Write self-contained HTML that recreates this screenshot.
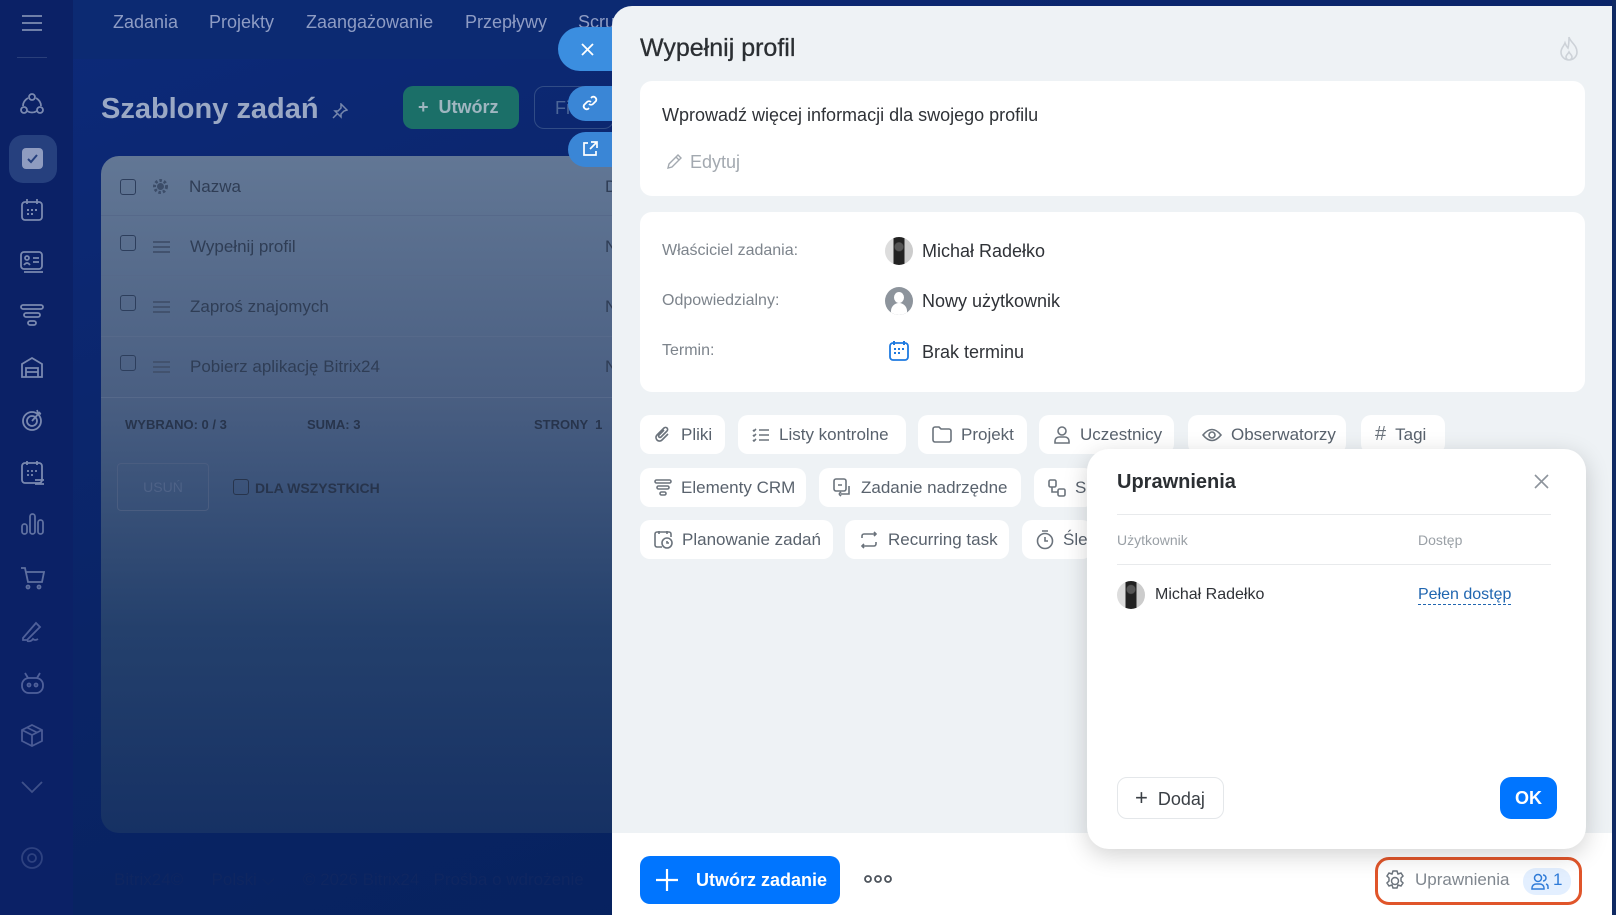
<!DOCTYPE html>
<html><head><meta charset="utf-8"><style>
*{box-sizing:border-box;margin:0;padding:0}
body{width:1616px;height:915px;overflow:hidden;position:relative;font-family:"Liberation Sans",sans-serif;background:#0a2158}
.abs{position:absolute}
.bg{left:0;top:0;width:1616px;height:915px;background:linear-gradient(160deg,#0d2a7a 0%,#0a2466 45%,#04215a 100%)}
.side{left:0;top:0;width:73px;height:915px;background:#0b2166}
.nav{left:73px;top:0;width:560px;height:59px;background:#0c2a72}
.navt{top:12px;font-size:18px;color:#8e9cc4}
.card{left:101px;top:156px;width:530px;height:677px;border-radius:18px;background:linear-gradient(180deg,#627795 0%,#4a5f82 35%,#24406c 70%,#163164 100%)}
.row{left:101px;width:511px;height:1px;background:#56698a}
.cb{width:16px;height:16px;border:1.5px solid #2d3e5c;border-radius:3px}
.rt{font-size:17px;color:#2f3d55}
.panel{left:612px;top:6px;width:1000px;height:909px;background:#eef2f5;border-top-left-radius:20px}
.w{background:#fff;border-radius:12px}
.chip{position:absolute;height:39px;background:#fff;border-radius:10px;font-size:17px;color:#59626d;display:flex;align-items:center;padding-left:14px;gap:9px;white-space:nowrap;overflow:hidden}
.chip svg{flex:none}
.lbl{left:662px;font-size:16px;color:#7d848c}
.val{left:922px;font-size:18px;color:#2f3237}
.sbtn{background:#3b8ee0;border-radius:22px 0 0 22px}
</style></head><body>
<div class="abs bg"></div>
<div class="abs side"></div>
<div class="abs nav"></div>
<svg class="abs" style="left:21px;top:14px" width="22" height="18"><path d="M1 2h20M1 9h20M1 16h20" stroke="#6f7fa8" stroke-width="2"/></svg>
<div class="abs" style="left:17px;top:57px;width:30px;height:1px;background:#2a3f7a"></div>
<svg class="abs" style="left:20px;top:92px" width="24" height="24" fill="none" stroke="#7a89b0" stroke-width="1.8"><circle cx="12" cy="5" r="3"/><circle cx="4" cy="18" r="3"/><circle cx="20" cy="18" r="3"/><path d="M7 19q5 3 10 0M3 14q0-5 5-8M21 14q0-5-5-8"/></svg>
<div class="abs" style="left:9px;top:135px;width:48px;height:48px;border-radius:14px;background:#26407e"></div>
<svg class="abs" style="left:22px;top:148px" width="21" height="21"><rect width="21" height="21" rx="4" fill="#8f9cc0"/><path d="M6 11l3 3 6-7" stroke="#26407e" stroke-width="2" fill="none"/></svg>
<svg class="abs" style="left:20px;top:198px" width="24" height="24" fill="none" stroke="#7a89b0" stroke-width="1.8"><rect x="2" y="4" width="20" height="18" rx="3"/><path d="M7 1v5M17 1v5"/><path d="M7 12h2M11 12h2M15 12h2M7 16h2M11 16h2" stroke-width="2"/></svg>
<svg class="abs" style="left:19px;top:250px" width="26" height="24" fill="none" stroke="#7a89b0" stroke-width="1.8"><rect x="2" y="2" width="21" height="17" rx="3"/><circle cx="8" cy="8" r="2"/><path d="M5 15q3-4 6 0M14 8h6M14 12h6M5 22h19"/></svg>
<svg class="abs" style="left:20px;top:303px" width="24" height="24" fill="none" stroke="#7a89b0" stroke-width="1.8"><rect x="1" y="2" width="22" height="4" rx="2"/><rect x="4" y="10" width="16" height="4" rx="2"/><rect x="8" y="18" width="8" height="4" rx="2"/></svg>
<svg class="abs" style="left:20px;top:355px" width="24" height="24" fill="none" stroke="#7a89b0" stroke-width="1.8"><path d="M2 22V9l10-6 10 6v13zM6 22v-9h12v9M6 17h12"/></svg>
<svg class="abs" style="left:20px;top:408px" width="24" height="24" fill="none" stroke="#7a89b0" stroke-width="1.8"><circle cx="12" cy="13" r="9"/><circle cx="12" cy="13" r="5"/><path d="M12 13l8-9M17 2l1 3 3 1"/></svg>
<svg class="abs" style="left:20px;top:460px" width="26" height="26" fill="none" stroke="#7a89b0" stroke-width="1.8"><rect x="2" y="3" width="20" height="20" rx="3"/><path d="M7 1v4M17 1v4M7 11h2M11 11h2M15 11h2M7 15h2M11 15h2M15 20h9M15 24h9"/></svg>
<svg class="abs" style="left:20px;top:512px" width="24" height="24" fill="none" stroke="#5f70a0" stroke-width="1.8"><rect x="2" y="12" width="5" height="10" rx="2.5"/><rect x="10" y="2" width="5" height="20" rx="2.5"/><rect x="18" y="8" width="5" height="14" rx="2.5"/></svg>
<svg class="abs" style="left:20px;top:566px" width="25" height="24" fill="none" stroke="#5f70a0" stroke-width="1.8"><path d="M1 2h4l3 14h14l2-10H6"/><circle cx="8" cy="21" r="1.5"/><circle cx="19" cy="21" r="1.5"/></svg>
<svg class="abs" style="left:20px;top:619px" width="24" height="24" fill="none" stroke="#4f609a" stroke-width="1.8"><path d="M3 19L16 4l4 4L7 21H3zM7 22q4 1 6-2q2 2 5 0"/></svg>
<svg class="abs" style="left:20px;top:671px" width="25" height="24" fill="none" stroke="#4f609a" stroke-width="1.8"><path d="M5 2l3 5M20 2l-3 5"/><rect x="2" y="7" width="21" height="15" rx="7"/><circle cx="9" cy="14" r="1.5"/><circle cx="16" cy="14" r="1.5"/></svg>
<svg class="abs" style="left:20px;top:723px" width="24" height="25" fill="none" stroke="#4a5b95" stroke-width="1.8"><path d="M12 2l10 5v11l-10 5-10-5V7zM2 7l10 5 10-5M12 12v11M7 4.5l10 5"/></svg>
<svg class="abs" style="left:20px;top:780px" width="24" height="14" fill="none" stroke="#3f518a" stroke-width="1.8"><path d="M2 2l10 10 10-10"/></svg>
<svg class="abs" style="left:20px;top:846px" width="24" height="24" fill="none" stroke="#2e4280" stroke-width="1.8"><circle cx="12" cy="12" r="4"/><circle cx="12" cy="12" r="10"/></svg>
<div class="abs navt" style="left:113px">Zadania</div>
<div class="abs navt" style="left:209px">Projekty</div>
<div class="abs navt" style="left:306px">Zaangażowanie</div>
<div class="abs navt" style="left:465px">Przepływy</div>
<div class="abs navt" style="left:578px">Scru</div>
<div class="abs" style="left:101px;top:93px;font-size:29px;font-weight:bold;color:#9aa8c4">Szablony zadań</div>
<svg class="abs" style="left:332px;top:103px" width="16" height="16" fill="none" stroke="#7687ad" stroke-width="1.5"><path d="M9 1l6 6-3 1-3 3 0 3-6-6 3 0 3-3zM5 11l-4 4"/></svg>
<div class="abs" style="left:403px;top:86px;width:116px;height:43px;border-radius:10px;background:#1b6f68;color:#9fb6c0;font-size:18px;font-weight:bold;line-height:43px;padding-left:15px">+&nbsp; Utwórz</div>
<div class="abs" style="left:534px;top:86px;width:80px;height:43px;border-radius:10px;border:1px solid #314c86;color:#4c6698;font-size:18px;line-height:43px;padding-left:20px">Fi</div>
<div class="abs card"></div>
<div class="abs cb" style="left:120px;top:179px"></div>
<svg class="abs" style="left:152px;top:178px" width="17" height="17"><circle cx="8.5" cy="8.5" r="6" fill="none" stroke="#3c4d69" stroke-width="3" stroke-dasharray="2.5 2"/><circle cx="8.5" cy="8.5" r="3.5" fill="#3c4d69"/></svg>
<div class="abs rt" style="left:189px;top:177px">Nazwa</div>
<div class="abs row" style="top:215px"></div>
<div class="abs row" style="top:275px"></div>
<div class="abs row" style="top:336px"></div>
<div class="abs row" style="top:397px"></div>
<div class="abs cb" style="left:120px;top:235px"></div><div class="abs" style="left:153px;top:241px;width:17px;height:12px;border-top:2px solid #42526e;border-bottom:2px solid #42526e"><div style="margin-top:3px;height:2px;background:#42526e"></div></div>
<div class="abs rt" style="left:190px;top:237px">Wypełnij profil</div>
<div class="abs cb" style="left:120px;top:295px"></div><div class="abs" style="left:153px;top:301px;width:17px;height:12px;border-top:2px solid #42526e;border-bottom:2px solid #42526e"><div style="margin-top:3px;height:2px;background:#42526e"></div></div>
<div class="abs rt" style="left:190px;top:297px">Zaproś znajomych</div>
<div class="abs cb" style="left:120px;top:355px"></div><div class="abs" style="left:153px;top:361px;width:17px;height:12px;border-top:2px solid #42526e;border-bottom:2px solid #42526e"><div style="margin-top:3px;height:2px;background:#42526e"></div></div>
<div class="abs rt" style="left:190px;top:357px">Pobierz aplikację Bitrix24</div>
<div class="abs rt" style="left:605px;top:177px">D</div>
<div class="abs rt" style="left:605px;top:297px">N</div>
<div class="abs rt" style="left:605px;top:357px">N</div>
<div class="abs rt" style="left:605px;top:237px">N</div>
<div class="abs" style="left:125px;top:417px;font-size:13px;color:#27344c;font-weight:bold">WYBRANO: 0 / 3</div>
<div class="abs" style="left:307px;top:417px;font-size:13px;color:#27344c;font-weight:bold">SUMA: 3</div>
<div class="abs" style="left:534px;top:417px;font-size:13px;color:#27344c;font-weight:bold">STRONY &nbsp;1</div>
<div class="abs" style="left:117px;top:463px;width:92px;height:48px;border:1px solid #4a5d80;border-radius:4px;color:#4e6287;font-size:14px;text-align:center;line-height:46px">USUŃ</div>
<div class="abs cb" style="left:233px;top:479px;border-color:#27344c"></div>
<div class="abs" style="left:255px;top:480px;font-size:14px;color:#27344c;font-weight:bold">DLA WSZYSTKICH</div>
<div class="abs" style="left:114px;top:870px;font-size:17px;color:#0f2660">Bitrix24©&nbsp;&nbsp;&nbsp;&nbsp;&nbsp;&nbsp;Polski ⌵&nbsp;&nbsp;&nbsp;&nbsp;&nbsp;&nbsp;© 2026 Bitrix24&nbsp;&nbsp;&nbsp;Prośba o wdrożenie</div>
<div class="abs sbtn" style="left:558px;top:27px;width:60px;height:44px"></div>
<svg class="abs" style="left:581px;top:43px" width="13" height="13" stroke="#fff" stroke-width="1.8"><path d="M1 1l11 11M12 1L1 12"/></svg>
<div class="abs sbtn" style="left:568px;top:86px;width:50px;height:35px;background:#3a86d6"></div>
<svg class="abs" style="left:581px;top:94px" width="18" height="18" fill="none" stroke="#fff" stroke-width="1.8"><path d="M8 10a3 3 0 0 0 4 0l3-3a3 3 0 0 0-4-4l-1 1M10 8a3 3 0 0 0-4 0l-3 3a3 3 0 0 0 4 4l1-1"/></svg>
<div class="abs sbtn" style="left:568px;top:132px;width:50px;height:35px;background:#3a86d6"></div>
<svg class="abs" style="left:582px;top:141px" width="16" height="16" fill="none" stroke="#fff" stroke-width="1.7"><path d="M6 2H2v12h12v-4M9 1h6v6M15 1L8 8"/></svg>
<div class="abs panel"></div>
<div class="abs" style="left:1612px;top:0;width:4px;height:915px;background:#102a63"></div>
<div class="abs" style="left:640px;top:34px;font-size:25px;color:#2b2f33;-webkit-text-stroke:0.3px #2b2f33">Wypełnij profil</div>
<svg class="abs" style="left:1559px;top:36px" width="20" height="26" fill="none" stroke="#cdd2d8" stroke-width="1.6"><path d="M10 1c1 5 8 8 8 15a8 8 0 0 1-16 0c0-4 3-6 4-9 1 3 2 4 3 5 1-4 1-7 1-11zM10 24a3 3 0 0 1-3-3c0-2 2-3 3-5 1 2 3 3 3 5a3 3 0 0 1-3 3z"/></svg>
<div class="abs w" style="left:640px;top:81px;width:945px;height:115px"></div>
<div class="abs" style="left:662px;top:105px;font-size:18px;color:#2f3237">Wprowadź więcej informacji dla swojego profilu</div>
<svg class="abs" style="left:666px;top:153px" width="16" height="17" fill="none" stroke="#a3a9b0" stroke-width="1.4"><path d="M2 15l1-4 9-9 3 3-9 9zM10 4l3 3"/></svg>
<div class="abs" style="left:690px;top:152px;font-size:18px;color:#a3a9b0">Edytuj</div>
<div class="abs w" style="left:640px;top:212px;width:945px;height:180px"></div>
<div class="abs lbl" style="top:242px">Właściciel zadania:</div>
<div class="abs lbl" style="top:292px">Odpowiedzialny:</div>
<div class="abs lbl" style="top:342px">Termin:</div>
<div class="abs" style="left:885px;top:237px;width:28px;height:28px;border-radius:50%;background:radial-gradient(circle at 50% 35%,#555 0 4px,transparent 5px),linear-gradient(90deg,#ddd 0 30%,#222 30% 70%,#ccc 70%)"></div>
<div class="abs" style="left:885px;top:287px;width:28px;height:28px;border-radius:50%;background:#8d949c;overflow:hidden"><div style="position:absolute;left:9px;top:5px;width:10px;height:11px;border-radius:50%;background:#fff"></div><div style="position:absolute;left:6px;top:16px;width:16px;height:14px;border-radius:8px 8px 0 0;background:#fff"></div></div>
<svg class="abs" style="left:889px;top:340px" width="20" height="21" fill="none" stroke="#1e7ae0" stroke-width="1.8"><rect x="1" y="3" width="18" height="17" rx="3"/><path d="M5 1v4M15 1v4M5 9h2M9 9h2M13 9h2M5 13h2M9 13h2" stroke-width="2"/></svg>
<div class="abs val" style="top:241px">Michał Radełko</div>
<div class="abs val" style="top:291px">Nowy użytkownik</div>
<div class="abs val" style="top:342px">Brak terminu</div>
<div class="chip" style="left:640px;top:415px;width:85px"><svg width="18" height="18" fill="none" stroke="#6b737c" stroke-width="1.6"><path d="M14 8l-6 6a3 3 0 0 1-5-5l7-7a2 2 0 0 1 3 3L7 11a1 1 0 0 1-2-2l5-5"/></svg>Pliki</div>
<div class="chip" style="left:738px;top:415px;width:168px"><svg width="18" height="16" fill="none" stroke="#6b737c" stroke-width="1.6"><path d="M7 3h10M7 8h10M7 13h10M1 3l1 1 2-2M1 8l1 1 2-2M1 13l1 1 2-2"/></svg>Listy kontrolne</div>
<div class="chip" style="left:918px;top:415px;width:109px"><svg width="20" height="17" fill="none" stroke="#6b737c" stroke-width="1.6"><path d="M1 3a2 2 0 0 1 2-2h4l2 2h8a2 2 0 0 1 2 2v9a2 2 0 0 1-2 2H3a2 2 0 0 1-2-2z"/></svg>Projekt</div>
<div class="chip" style="left:1039px;top:415px;width:135px"><svg width="18" height="19" fill="none" stroke="#6b737c" stroke-width="1.6"><circle cx="9" cy="6" r="4"/><path d="M2 18v-2a4 4 0 0 1 4-4h6a4 4 0 0 1 4 4v2z"/></svg>Uczestnicy</div>
<div class="chip" style="left:1188px;top:415px;width:158px"><svg width="20" height="14" fill="none" stroke="#6b737c" stroke-width="1.6"><path d="M1 7q9-11 18 0q-9 11-18 0z"/><circle cx="10" cy="7" r="3"/></svg>Obserwatorzy</div>
<div class="chip" style="left:1361px;top:415px;width:84px"><span style="font-size:20px;color:#6b737c">#</span>Tagi</div>
<div class="chip" style="left:640px;top:468px;width:166px"><svg width="18" height="18" fill="none" stroke="#6b737c" stroke-width="1.6"><rect x="1" y="1" width="16" height="3" rx="1.5"/><rect x="3" y="7" width="12" height="3" rx="1.5"/><rect x="6" y="13" width="6" height="3" rx="1.5"/></svg>Elementy CRM</div>
<div class="chip" style="left:819px;top:468px;width:202px"><svg width="19" height="19" fill="none" stroke="#6b737c" stroke-width="1.6"><rect x="1" y="1" width="12" height="12" rx="2"/><path d="M5 7h4M16 8v8H8M6 16l2 2M6 16l2-2"/></svg>Zadanie nadrzędne</div>
<div class="chip" style="left:1034px;top:468px;width:60px"><svg width="18" height="18" fill="none" stroke="#6b737c" stroke-width="1.6"><rect x="1" y="1" width="7" height="7" rx="1.5"/><rect x="10" y="10" width="7" height="7" rx="1.5"/><path d="M4 8v5h6"/></svg>Sz</div>
<div class="chip" style="left:640px;top:520px;width:193px"><svg width="19" height="19" fill="none" stroke="#6b737c" stroke-width="1.6"><path d="M8 17H3a2 2 0 0 1-2-2V4a2 2 0 0 1 2-2h12a2 2 0 0 1 2 2v3M5 1v3M13 1v3"/><circle cx="13" cy="13" r="5"/><path d="M13 11v2h2"/></svg>Planowanie zadań</div>
<div class="chip" style="left:845px;top:520px;width:164px"><svg width="20" height="18" fill="none" stroke="#6b737c" stroke-width="1.6"><path d="M3 7V5a2 2 0 0 1 2-2h12M15 1l2 2-2 2M17 11v2a2 2 0 0 1-2 2H3M5 17l-2-2 2-2"/></svg>Recurring task</div>
<div class="chip" style="left:1022px;top:520px;width:70px"><svg width="18" height="20" fill="none" stroke="#6b737c" stroke-width="1.6"><circle cx="9" cy="11" r="7.5"/><path d="M6 1h6M9 7v4h3"/></svg>Śled</div>
<div class="abs" style="left:612px;top:833px;width:1000px;height:82px;background:#fff"></div>
<div class="abs" style="left:640px;top:856px;width:200px;height:48px;border-radius:10px;background:#0075ff;color:#fff;font-size:18px;font-weight:bold;line-height:48px;padding-left:56px">Utwórz zadanie</div>
<svg class="abs" style="left:656px;top:869px" width="22" height="22" stroke="#fff" stroke-width="2.2"><path d="M11 0v22M0 11h22"/></svg>
<svg class="abs" style="left:864px;top:874px" width="28" height="10" fill="none" stroke="#4d545c" stroke-width="1.8"><circle cx="4" cy="5" r="3"/><circle cx="14" cy="5" r="3"/><circle cx="24" cy="5" r="3"/></svg>
<div class="abs" style="left:1375px;top:857px;width:207px;height:48px;border:3px solid #e0552a;border-radius:14px"></div>
<svg class="abs" style="left:1384px;top:870px" width="22" height="22" fill="none" stroke="#6b737c" stroke-width="1.5"><circle cx="11" cy="11" r="3.5"/><path d="M9 1h4l1 3 3-1 2 3-2 2 0 3 2 2-2 3-3-1-1 3H9l-1-3-3 1-2-3 2-2V8L3 6l2-3 3 1z"/></svg>
<div class="abs" style="left:1415px;top:870px;font-size:17px;color:#80878f">Uprawnienia</div>
<div class="abs" style="left:1523px;top:868px;width:48px;height:27px;border-radius:13px;background:#e3efff"></div>
<svg class="abs" style="left:1531px;top:873px" width="18" height="17" fill="none" stroke="#2f7bd8" stroke-width="1.5"><circle cx="7" cy="5" r="3.5"/><path d="M1 16v-1a4 4 0 0 1 4-4h4a4 4 0 0 1 4 4v1zM12 2a3 3 0 0 1 0 6M15 11a3 3 0 0 1 2 3v2"/></svg>
<div class="abs" style="left:1553px;top:870px;font-size:17px;color:#2f7bd8">1</div>
<div class="abs" style="left:1087px;top:449px;width:499px;height:400px;background:#fff;border-radius:22px;box-shadow:0 6px 24px rgba(0,0,0,.18)"></div>
<div class="abs" style="left:1117px;top:471px;font-size:20px;color:#2b2f33;font-weight:bold">Uprawnienia</div>
<svg class="abs" style="left:1534px;top:474px" width="15" height="15" stroke="#8d949c" stroke-width="1.6"><path d="M1 1l13 13M14 1L1 14"/></svg>
<div class="abs" style="left:1117px;top:514px;width:434px;height:1px;background:#e8eaec"></div>
<div class="abs" style="left:1117px;top:532px;font-size:14px;color:#9aa0a6">Użytkownik</div>
<div class="abs" style="left:1418px;top:532px;font-size:14px;color:#9aa0a6">Dostęp</div>
<div class="abs" style="left:1117px;top:564px;width:434px;height:1px;background:#e8eaec"></div>
<div class="abs" style="left:1117px;top:581px;width:28px;height:28px;border-radius:50%;background:radial-gradient(circle at 50% 30%,#555 0 4px,transparent 5px),linear-gradient(90deg,#ddd 0 30%,#222 30% 70%,#ccc 70%)"></div>
<div class="abs" style="left:1155px;top:586px;font-size:16px;color:#2f3237">Michał Radełko</div>
<div class="abs" style="left:1418px;top:586px;font-size:16px;color:#2066b0;border-bottom:1px dashed #2066b0;line-height:18px">Pełen dostęp</div>
<div class="abs" style="left:1117px;top:777px;width:107px;height:42px;border:1px solid #e4e7ea;border-radius:10px;font-size:18px;color:#3a3f45;line-height:40px;padding-left:17px"><span style="font-size:22px;font-weight:300">+</span>&nbsp; Dodaj</div>
<div class="abs" style="left:1500px;top:777px;width:57px;height:42px;background:#0075ff;border-radius:11px;color:#fff;font-weight:bold;font-size:18px;text-align:center;line-height:42px">OK</div>
</body></html>
